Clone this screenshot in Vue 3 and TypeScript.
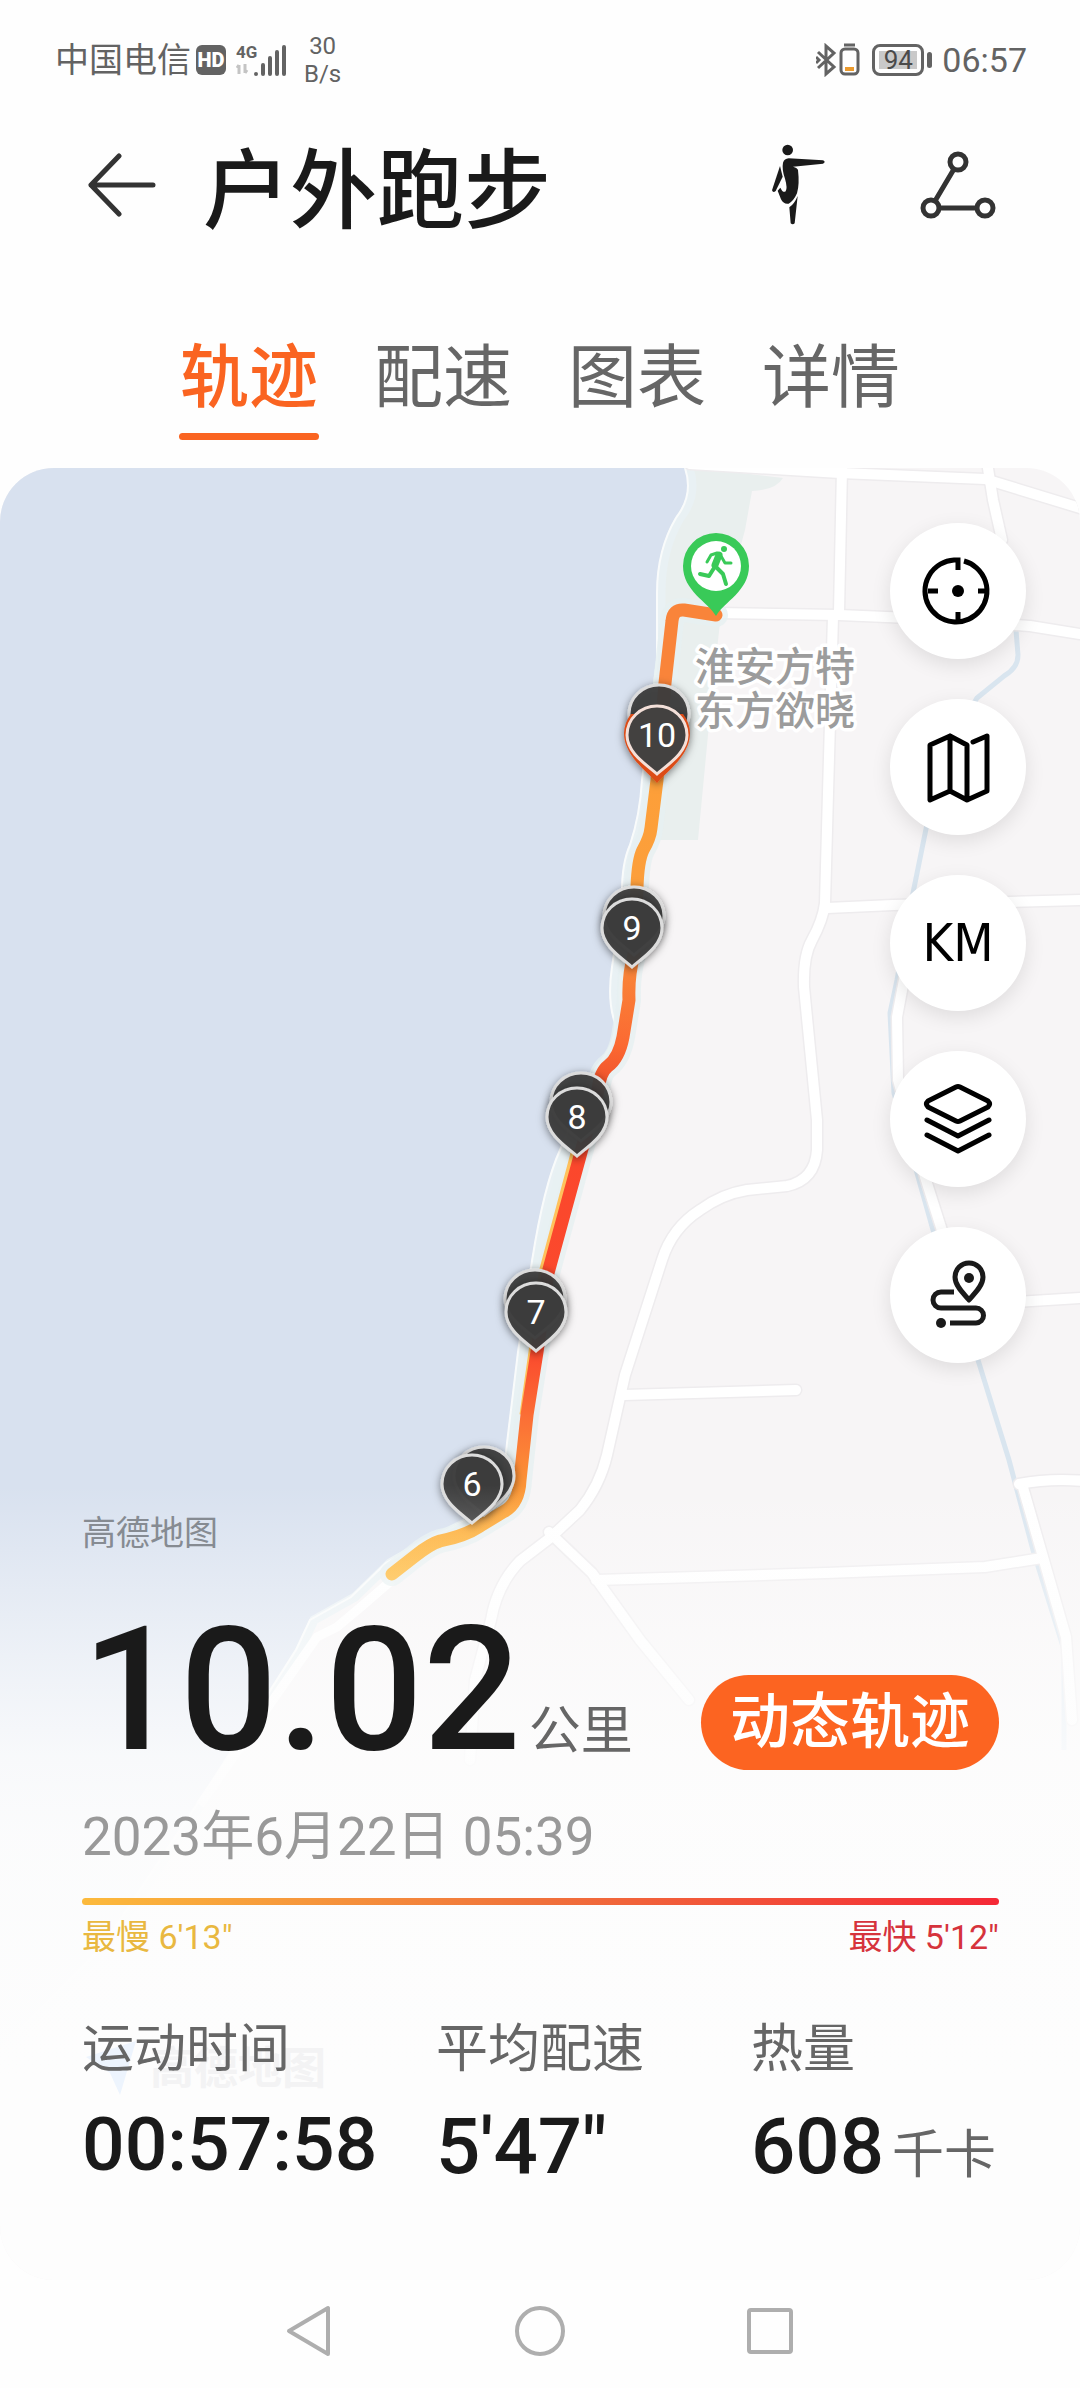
<script setup lang="ts">
import { ref } from 'vue'

interface Pin { x: number; top: number; label?: string }
interface Metric { name: string; value: string; unit?: string; compact?: boolean }

const tabs: string[] = ['轨迹', '配速', '图表', '详情']
const activeTab = ref<string>('轨迹')

const pins: Pin[] = [
  { x: 659, top: 685 },
  { x: 634, top: 887 },
  { x: 632, top: 899, label: '9' },
  { x: 581, top: 1073 },
  { x: 577, top: 1088, label: '8' },
  { x: 535, top: 1270 },
  { x: 536, top: 1283, label: '7' },
  { x: 484, top: 1447 },
  { x: 472, top: 1455, label: '6' },
]

const metrics: Metric[] = [
  { name: '运动时间', value: '00:57:58', compact: true },
  { name: '平均配速', value: '5\'47"' },
  { name: '热量', value: '608', unit: '千卡' },
]

const pinShape = 'M0 68C-10 59-30 47-30 29A30 29 0 0 1 30 29C30 47 10 59 0 68Z'
const roads: string[] = [
  'M690 464L840 473L985 479L1080 508',
  'M842 468L839 612',
  'M833 616L828 793L825 903Q823 920 812 940Q803 956 804 987L817 1120V1150Q815 1180 787 1186L747 1190Q722 1194 700 1210Q672 1228 662 1260L625 1375L607 1455Q600 1485 580 1510L550 1538L520 1561Q497 1585 491 1620L475 1680L470 1760',
  'M715 613L839 615L910 618L1030 626L1080 634',
  'M987 462L993 500L1002 540',
  'M827 908L893 905L1080 900',
  'M908 960L903 985L897 1017L898 1080L925 1177L945 1240L965 1300',
  'M1000 1303L1080 1298',
  'M624 1395L796 1390',
  'M1019 1484Q1050 1478 1085 1481M1022 1484L1043 1557L1066 1637L1072 1720',
  'M596 1580L826 1573L985 1567L1042 1558',
  'M549 1532L592 1573L640 1640L689 1700',
]
const river = 'M1016 630L1018 655Q1018 668 1004 676L977 698L940 760L913 893L897 980L890 1013L894 1093L917 1173L933 1230L978 1360L1009 1460L1033 1550L1064 1650V1750'
const shore = 'M685 468Q694 495 676 518Q657 550 657 593V660L642 780Q640 815 630 845Q621 865 622 900L612 967Q607 1000 615 1023Q616 1045 595 1069L560 1150Q544 1185 532 1261L518 1352L507 1443L500 1506L463 1522L423 1542L386 1563L351 1597L310 1620L296 1650L275 1683L200 1800L100 1950L0 2050'
const track = 'M716 615L684 610Q673 609 672 621L665 683L657 780L651 828Q650 838 643 850Q638 860 637 887L634 955Q628 975 629 1000L623 1037Q619 1058 608 1066Q600 1072 598 1090L580 1156L548 1273L537 1352L527 1415L520 1480Q519 1504 503 1512L480 1526Q465 1536 440 1541Q430 1544 415 1556L392 1574'
</script>

<template>
  <main class="screen">
    <header class="status">
      <div class="status-side">
        <span class="carrier">中国电信</span>
        <span class="hd">HD</span>
        <span class="signal">
          <svg viewBox="0 0 52 34" width="52" height="34" aria-hidden="true">
            <text x="0" y="15" class="net">4G</text>
            <path d="M3 31V22M3 22L1 25M9 21V30M9 30L11 27" stroke="#c4c4c4" stroke-width="3" fill="none" />
            <path d="M20 31V31M27 31V22M34 31V15M41 31V9M48 31V4" stroke="#636363" stroke-width="4" stroke-linecap="round" />
          </svg>
        </span>
        <span class="speed">30<br>B/s</span>
      </div>
      <div class="status-side">
        <svg viewBox="0 0 44 34" width="44" height="34" aria-hidden="true" fill="none" stroke="#636363" stroke-width="3">
          <path d="M2 9L18 24L10 31V3L18 10L2 25M0 14L3 17L0 20" />
          <rect x="25" y="6" width="17" height="25" rx="4" />
          <path d="M28 2H39" />
          <path d="M29 26H38" stroke="#eb9a2d" stroke-width="4" />
        </svg>
        <span class="battery"><span class="level">94</span></span>
        <time class="clock">06:57</time>
      </div>
    </header>

    <div class="titlebar">
      <button class="icon-btn back" aria-label="返回">
        <svg viewBox="0 0 68 64" width="68" height="64" fill="none" stroke="#333" stroke-width="5" stroke-linecap="round" stroke-linejoin="round">
          <path d="M31 3L3 32L31 61M3 32H65" />
        </svg>
      </button>
      <h1>户外跑步</h1>
      <button class="icon-btn stretch" aria-label="拉伸">
        <svg viewBox="92 44 168 246" width="56" height="82" fill="#1a1a1a">
          <circle cx="142" cy="62" r="16" />
          <path d="M145 87L248 93Q258 98 248 103L158 112Q172 116 173 122Q178 165 170 192Q160 215 145 223Q130 226 122 210L112 184L120 175Q128 192 136 186Q142 176 134 148Q124 120 128 100Q132 88 145 87Z" />
          <path d="M119 110L127 142L106 185Q98 192 95 183Z" />
          <path d="M172 200L163 282Q157 288 151 282L147 234Q162 224 172 200Z" />
        </svg>
      </button>
      <button class="icon-btn" aria-label="分享">
        <svg viewBox="0 0 76 68" width="76" height="68" fill="none" stroke="#333" stroke-width="5">
          <circle cx="38" cy="11" r="8" /><circle cx="11" cy="57" r="8" /><circle cx="65" cy="57" r="8" />
          <path d="M34 18L15 50M19 57H57" />
        </svg>
      </button>
    </div>

    <nav class="tabs">
      <button
        v-for="tab in tabs"
        :key="tab"
        class="tab"
        :class="{ active: tab === activeTab }"
        @click="activeTab = tab"
      >{{ tab }}</button>
    </nav>

    <section class="map">
      <svg class="canvas" viewBox="0 468 1080 1812" preserveAspectRatio="xMidYMin slice" aria-hidden="true">
        <defs>
          <linearGradient id="pace" gradientUnits="userSpaceOnUse" x1="0" y1="610" x2="0" y2="1574">
            <stop offset="0" stop-color="#f9843a" />
            <stop offset="0.16" stop-color="#f9843a" />
            <stop offset="0.18" stop-color="#fd9f39" />
            <stop offset="0.28" stop-color="#fc9f3b" />
            <stop offset="0.38" stop-color="#f98238" />
            <stop offset="0.45" stop-color="#fb6a32" />
            <stop offset="0.49" stop-color="#f1532c" />
            <stop offset="0.55" stop-color="#fb472c" />
            <stop offset="0.77" stop-color="#fb4a2d" />
            <stop offset="0.84" stop-color="#fb7036" />
            <stop offset="0.91" stop-color="#fc9536" />
            <stop offset="0.96" stop-color="#feb038" />
            <stop offset="1" stop-color="#ffb630" />
          </linearGradient>
          <filter id="pin-shadow" x="-30%" y="-30%" width="160%" height="160%">
            <feDropShadow dx="0" dy="2" stdDeviation="4" flood-color="#000" flood-opacity="0.5" />
          </filter>
        </defs>
        <rect x="0" y="468" width="1080" height="1812" fill="#f7f5f6" />
        <path d="M685 468H700L783 478Q776 490 752 491L745 530L720 622L708 735L698 840H640V600Z" fill="#e9efee" />
        <path :d="shore + 'V468Z'" fill="#d8e1ef" />
        <path :d="shore" fill="none" stroke="#e9f1f4" stroke-width="9" transform="translate(4 0)" />
        <path d="M560 1150L532 1261L518 1352L507 1443L500 1506L423 1546" fill="none" stroke="#e8f1f3" stroke-width="14" transform="translate(8 0)" />
        <path :d="shore" fill="none" stroke="#f9fbfb" stroke-width="2" />
        <path d="M392 1580L362 1606L337 1627L317 1637L275 1697L200 1805" fill="none" stroke="#fff" stroke-width="9" />
        <path :d="river" fill="none" stroke="#d9e5ef" stroke-width="5" />
        <path v-for="(road, i) in roads" :key="'edge' + i" :d="road" fill="none" stroke="#eeecee" stroke-width="13" stroke-linecap="round" stroke-linejoin="round" />
        <path v-for="(road, i) in roads" :key="'road' + i" :d="road" fill="none" stroke="#fff" stroke-width="10" stroke-linecap="round" stroke-linejoin="round" />

        <g class="place">
          <text x="695" y="681">淮安方特</text>
          <text x="695" y="725">东方欲晓</text>
        </g>

        <path :d="track" fill="none" stroke="#e6f0f1" stroke-width="24" stroke-linejoin="round" stroke-linecap="round" opacity="0.8" />
        <path d="M576 1150L543 1273L533 1352L524 1415" fill="none" stroke="#ffc25c" stroke-width="9" />
        <path :d="track" fill="none" stroke="url(#pace)" stroke-width="13" stroke-linejoin="round" stroke-linecap="round" />

        <g v-for="(pin, i) in pins" :key="i" :transform="`translate(${pin.x} ${pin.top})`">
          <path :d="pinShape" fill="#3c3b3b" fill-opacity="0.94" stroke="#dcdcdc" stroke-width="3" filter="url(#pin-shadow)" />
          <text v-if="pin.label" class="pin-text" x="0" y="41">{{ pin.label }}</text>
        </g>
        <g transform="translate(657 706)">
          <path d="M0 77C-9 66-33 50-33 27A33 33 0 0 1-26 8L26 8A33 33 0 0 1 33 27C33 50 9 66 0 77Z" fill="#dc4c18" filter="url(#pin-shadow)" />
          <path :d="pinShape" fill="#434140" stroke="#f3dfd8" stroke-width="3" />
          <text class="pin-text" x="0" y="41">10</text>
        </g>

        <path d="M716 616C708 602 683 591 683 566A33 33 0 0 1 749 566C749 591 724 602 716 616Z" fill="#39ca58" />
        <circle cx="716" cy="566" r="25" fill="#fff" />
        <g transform="translate(716 566)" fill="none" stroke="#39ca58" stroke-linecap="round" stroke-linejoin="round">
          <circle cx="8" cy="-17" r="3" fill="#39ca58" stroke="none" />
          <path d="M3 -11L-1 -1" stroke-width="7" />
          <path d="M1 -13L-5 -11L-9 -4M5 -10L9 -3L15 -3" stroke-width="3" />
          <path d="M-1 0L7 8L10 18M-2 2L-7 10L-16 8" stroke-width="4" />
        </g>
      </svg>

      <div class="tools">
        <button class="tool" aria-label="定位">
          <svg viewBox="-36 -36 72 72" width="72" height="72" fill="none" stroke="#000" stroke-width="5">
            <path d="M6 -30A31 31 0 1 1 -4 -31H0V-21" />
            <path d="M0 21V30M-30 0H-20M20 0H30" />
            <circle r="6" fill="#000" stroke="none" />
          </svg>
        </button>
        <button class="tool" aria-label="地图类型">
          <svg viewBox="-36 -36 72 72" width="72" height="72" fill="none" stroke="#000" stroke-width="5" stroke-linecap="round" stroke-linejoin="round">
            <path d="M-28 33V-22L-8 -31L9 -22V33L-8 24ZM-8 -31V24M9 33L29 24V-31L15 -25" />
          </svg>
        </button>
        <button class="tool km">KM</button>
        <button class="tool" aria-label="图层">
          <svg viewBox="-36 -36 72 72" width="72" height="72" fill="none" stroke="#000" stroke-width="5" stroke-linecap="round" stroke-linejoin="round">
            <path d="M-2 -32Q0 -33 2 -32L30 -18Q33 -15 30 -12L2 2Q0 3 -2 2L-30 -12Q-33 -15 -30 -18Z" />
            <path d="M-31 1L0 17L31 1M-31 16L0 32L31 16" />
          </svg>
        </button>
        <button class="tool" aria-label="路线">
          <svg viewBox="-36 -36 72 72" width="72" height="72" fill="none" stroke="#1a1a1a" stroke-width="5">
            <path d="M11 5C6 -1 -3 -9 -3 -18A14 14 0 0 1 25 -18C25 -9 16 -1 11 5Z" stroke-linejoin="round" />
            <circle cx="11" cy="-17" r="5" fill="#1a1a1a" stroke="none" />
            <path d="M-4 -3H-17A8 8 0 0 0-17 13H18A7 7 0 0 1 18 28H-8" />
            <circle cx="-17" cy="28" r="5" fill="#1a1a1a" stroke="none" />
          </svg>
        </button>
      </div>

      <div class="panel">
        <p class="source">高德地图</p>
        <div class="summary">
          <p class="distance"><strong>10.02</strong><span class="unit">公里</span></p>
          <button class="replay">动态轨迹</button>
        </div>
        <time class="date">2023年6月22日 05:39</time>
        <div class="pace-bar"></div>
        <div class="pace-range">
          <span class="slow">最慢 6'13"</span>
          <span class="fast">最快 5'12"</span>
        </div>
        <dl class="metrics">
          <div v-for="m in metrics" :key="m.name">
            <dt>{{ m.name }}</dt>
            <dd :class="{ compact: m.compact }">{{ m.value }}<span v-if="m.unit" class="unit">{{ m.unit }}</span></dd>
          </div>
        </dl>
        <div class="watermark" aria-hidden="true">
          <svg viewBox="0 0 60 60" width="60" height="60"><path d="M4 18L54 2L38 56L28 34Z" fill="#edf4fd" /></svg>
          <span>高德地图</span>
        </div>
      </div>
    </section>

    <nav class="system-nav">
      <button class="icon-btn" aria-label="后退">
        <svg viewBox="0 0 50 56" width="50" height="56"><path d="M43 5V51L4 28Z" fill="none" stroke="#aeaeae" stroke-width="4" stroke-linejoin="round" /></svg>
      </button>
      <button class="icon-btn" aria-label="主页">
        <svg viewBox="0 0 50 56" width="50" height="56"><circle cx="25" cy="28" r="23" fill="none" stroke="#aeaeae" stroke-width="4" /></svg>
      </button>
      <button class="icon-btn" aria-label="最近任务">
        <svg viewBox="0 0 50 56" width="50" height="56"><rect x="4" y="7" width="42" height="42" rx="2" fill="none" stroke="#aeaeae" stroke-width="4" /></svg>
      </button>
    </nav>
  </main>
</template>

<style>
body { background: #fefefe; }
</style>

<style scoped>
.screen {
  display: flex;
  flex-direction: column;
  min-height: 100vh;
  font-family: Roboto, "Noto Sans CJK SC", sans-serif;
  color: #1a1a1a;
}
h1, p, dl, dd { margin: 0; }
button {
  padding: 0;
  border: 0;
  background: none;
  color: inherit;
  font: inherit;
  cursor: pointer;
}
svg { display: block; }

.status {
  display: flex;
  justify-content: space-between;
  align-items: center;
  height: 120px;
  padding: 0 53px 0 55px;
  color: #636363;
}
.status-side { display: flex; align-items: center; }
.carrier { font-size: 34px; line-height: 40px; }
.hd {
  width: 30px;
  margin-left: 5px;
  border-radius: 6px;
  background: #636363;
  color: #fff;
  font-size: 20px;
  font-weight: 900;
  line-height: 30px;
  text-align: center;
}
.signal { margin-left: 10px; }
.net { font: 700 17px Roboto, sans-serif; fill: #636363; }
.speed {
  margin-left: 16px;
  font-size: 24px;
  line-height: 28px;
  text-align: center;
}
.battery {
  position: relative;
  display: flex;
  width: 52px;
  height: 32px;
  margin: 0 18px 0 12px;
  padding: 4px;
  box-sizing: border-box;
  border: 3px solid #636363;
  border-radius: 8px;
}
.battery::after {
  content: "";
  position: absolute;
  top: 5px;
  right: -11px;
  width: 5px;
  height: 16px;
  border-radius: 3px;
  background: #636363;
}
.level {
  flex: 1;
  background: #c9c9c9;
  color: #4a4a4a;
  font-size: 26px;
  line-height: 18px;
  text-align: center;
}
.clock { font-size: 34px; line-height: 40px; }

.titlebar {
  display: flex;
  align-items: center;
  height: 130px;
  padding: 0 84px 0 88px;
}
.titlebar h1 {
  flex: 1;
  margin-left: 47px;
  padding-top: 14px;
  font-size: 87px;
  font-weight: 500;
  line-height: 110px;
}
.stretch { margin-right: 93px; }

.tabs {
  display: flex;
  justify-content: center;
  gap: 54px;
  padding: 94px 0 28px;
}
.tab {
  position: relative;
  width: 140px;
  padding-bottom: 26px;
  color: #666;
  font-size: 69px;
  line-height: 70px;
  white-space: nowrap;
}
.tab.active { color: #fa6421; font-weight: 500; }
.tab.active::after {
  content: "";
  position: absolute;
  left: 0;
  right: 0;
  bottom: 0;
  height: 7px;
  border-radius: 4px;
  background: #fa6421;
}

.map {
  position: relative;
  display: flex;
  flex: 1;
  flex-direction: column;
  overflow: hidden;
  border-radius: 54px;
  background: #fdfdfd;
}
.canvas {
  position: absolute;
  inset: 0;
  width: 100%;
  height: 100%;
}
.place text {
  fill: #9c9c9c;
  stroke: #fff;
  stroke-width: 7px;
  stroke-linejoin: round;
  paint-order: stroke;
  font: 500 40px "Noto Sans CJK SC", sans-serif;
}
.pin-text {
  fill: #fff;
  font: 400 34px Roboto, sans-serif;
  text-anchor: middle;
}
.tools {
  position: relative;
  display: flex;
  flex-direction: column;
  align-self: flex-end;
  gap: 40px;
  padding: 55px 54px 0 0;
}
.tool {
  display: flex;
  align-items: center;
  justify-content: center;
  width: 136px;
  height: 136px;
  border-radius: 50%;
  background: #fff;
  box-shadow: 0 6px 20px rgba(0, 0, 0, 0.1);
}
.km {
  color: #000;
  font-family: "DejaVu Sans Condensed", "DejaVu Sans", sans-serif;
  font-size: 52px;
}

.panel {
  position: relative;
  flex: 1;
  margin-top: 122px;
  padding: 24px 81px 0 82px;
  background: linear-gradient(
    rgba(253, 253, 253, 0) 0,
    rgba(253, 253, 253, 0.3) 90px,
    rgba(253, 253, 253, 0.6) 180px,
    rgba(253, 253, 253, 0.86) 270px,
    rgba(253, 253, 253, 0.95) 350px,
    #fdfdfd 600px
  );
}
.source {
  color: #868b92;
  font-size: 34px;
  line-height: 48px;
}
.summary {
  display: flex;
  align-items: flex-end;
  justify-content: space-between;
  margin-top: 53px;
}
.distance {
  display: flex;
  align-items: baseline;
  line-height: 160px;
}
.distance strong { font-size: 172px; font-weight: 500; }
.unit {
  margin-left: 8px;
  color: #666;
  font-size: 52px;
  font-weight: 400;
  line-height: 60px;
}
.replay {
  width: 298px;
  height: 95px;
  border-radius: 48px;
  background: #fc6421;
  color: #fff;
  font-size: 60px;
  font-weight: 500;
  line-height: 95px;
}
.date {
  display: block;
  margin-top: 32px;
  color: #999;
  font-size: 53px;
  line-height: 70px;
}
.pace-bar {
  height: 7px;
  margin-top: 26px;
  border-radius: 4px;
  background: linear-gradient(90deg, #fcba3c, #f0713b 50%, #f52836);
}
.pace-range {
  display: flex;
  justify-content: space-between;
  margin-top: 10px;
  font-size: 34px;
  line-height: 44px;
}
.slow { color: #e9b840; }
.fast { color: #d6333c; }
.metrics {
  position: relative;
  z-index: 1;
  display: grid;
  grid-template-columns: 354fr 315fr 248fr;
  margin-top: 56px;
  white-space: nowrap;
}
.metrics dt { color: #666; font-size: 52px; line-height: 70px; }
.metrics dd {
  margin-top: 12px;
  font-size: 78px;
  font-weight: 500;
  line-height: 100px;
}
.metrics dd.compact { font-size: 75px; line-height: 94px; }
.watermark {
  position: absolute;
  top: 554px;
  left: 82px;
  display: flex;
  align-items: center;
  gap: 8px;
  color: #f3f3f4;
  font-size: 44px;
  font-weight: 700;
  line-height: 50px;
}

.system-nav {
  display: flex;
  align-items: center;
  justify-content: center;
  gap: 180px;
  height: 102px;
  padding-bottom: 6px;
}
</style>
